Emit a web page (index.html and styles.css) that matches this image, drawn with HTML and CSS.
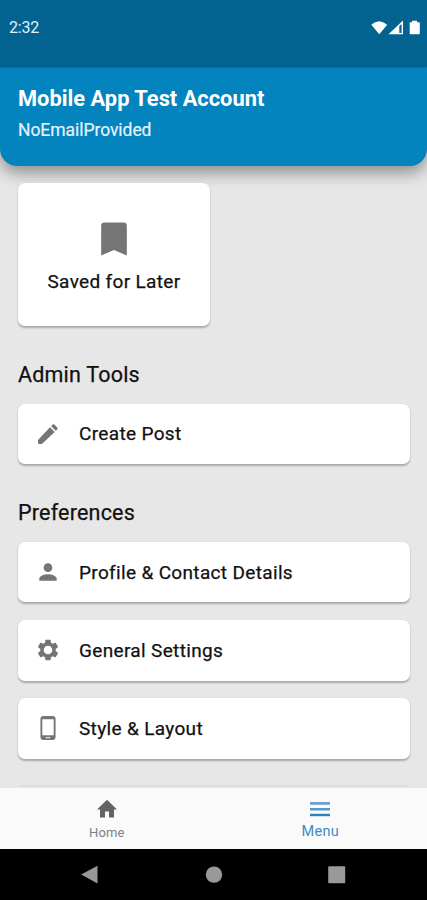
FILE: index.html
```html
<!DOCTYPE html>
<html lang="en">
<head>
<meta charset="utf-8">
<title>Menu</title>
<link rel="stylesheet" href="styles.css">
</head>
<body>
<div class="screen">
  <div class="status">
    <span class="time">2:32</span>
    <svg class="status-icons" width="50" height="16" viewBox="0 0 50 16" fill="#fff">
      <path d="M.3 4.8Q8 -2.2 16.2 4.8L8.3 14.2Z"/>
      <path fill-rule="evenodd" d="M17.5 14.2 32 .5V14.2ZM28.3 6v7h2.3V4Z"/>
      <path d="M39 2.200h2V.7h5v1.500h2q.8 0 .8.8v10.300q0 .9-.8.9h-8.500q-.8 0-.8-.9V3q0-.8.8-.8Z"/>
    </svg>
  </div>
  <header class="account">
    <h1>Mobile App Test Account</h1>
    <p>NoEmailProvided</p>
  </header>
  <main class="content">
    <section class="card tile">
      <svg width="44" height="44" viewBox="0 0 24 24"><path d="M17.500 3h-11c-.8 0-1.500.7-1.500 1.500V21l7-3 7 3V4.500c0-.8-.7-1.500-1.500-1.500z"/></svg>
      <span>Saved for Later</span>
    </section>
    <h2>Admin Tools</h2>
    <div class="list">
      <div class="card row">
        <svg width="26" height="26" viewBox="0 0 24 24"><path d="M2.800 17.600V20.200q0 1 1 1H6.400L18.200 10.200l-4.400-4.400zM20.710 7.600c.39-.39.39-1.020 0-1.410l-2.900-2.900c-.39-.39-1.020-.39-1.410 0l-1.500 1.500 4.310 4.310 1.500-1.500z"/></svg>
        <span>Create Post</span>
      </div>
    </div>
    <h2>Preferences</h2>
    <div class="list">
      <div class="card row">
        <svg width="26" height="26" viewBox="0 0 24 24"><path d="M12 12c2.210 0 4-1.790 4-4s-1.790-4-4-4-4 1.790-4 4 1.790 4 4 4zm0 2c-2.670 0-8 1.340-8 4v2h16v-2c0-2.660-5.330-4-8-4z"/></svg>
        <span>Profile &amp; Contact Details</span>
      </div>
      <div class="card row">
        <svg width="26" height="26" viewBox="-.6 -.6 25.200 25.200"><path fill-rule="evenodd" d="M19.430 12.980c.04-.32.07-.64.07-.98s-.03-.66-.07-.98l2.110-1.650c.19-.15.24-.42.12-.64l-2-3.460c-.12-.22-.39-.3-.61-.22l-2.490 1c-.52-.4-1.080-.73-1.690-.98l-.38-2.650C14.460 2.180 14.250 2 14 2h-4c-.25 0-.46.18-.49.42l-.38 2.650c-.61.25-1.170.59-1.690.98l-2.490-1c-.23-.09-.49 0-.61.22l-2 3.460c-.13.22-.07.49.12.64l2.110 1.650c-.04.32-.07.65-.07.98s.03.66.07.98l-2.110 1.650c-.19.15-.24.42-.12.64l2 3.460c.12.22.39.3.61.22l2.490-1c.52.4 1.080.73 1.690.98l.38 2.650c.03.24.24.42.49.42h4c.25 0 .46-.18.49-.42l.38-2.650c.61-.25 1.170-.59 1.690-.98l2.490 1c.23.09.49 0 .61-.22l2-3.460c.12-.22.07-.49-.12-.64l-2.110-1.650zM12 16.200a4.200 4.200 0 1 1 0-8.400 4.200 4.200 0 0 1 0 8.400z"/></svg>
        <span>General Settings</span>
      </div>
      <div class="card row">
        <svg width="26" height="26" viewBox="0 0 24 24"><path fill-rule="evenodd" d="M16.500 1h-9C6.100 1 5 2.100 5 3.500v17C5 21.900 6.100 23 7.500 23h9c1.400 0 2.500-1.100 2.500-2.500v-17C19 2.100 17.900 1 16.500 1zm-2.500 20.500h-4v-1h4v1zm3.250-2.700H6.750V4h10.500v14.800z"/></svg>
        <span>Style &amp; Layout</span>
      </div>
    </div>
    <div class="next-card"></div>
  </main>
  <nav class="tabs">
    <div class="tab">
      <svg width="24" height="24" viewBox="0 0 24 24"><path d="M10 20.500v-6h4v6h5v-8h3L12 2.800 2 12.500h3v8z"/></svg>
      <span>Home</span>
    </div>
    <div class="tab active">
      <svg width="24" height="24" viewBox="0 0 24 24"><path fill="#6fa3cb" d="M2 5h20v2.800H2z"/><path fill="#5b98c6" d="M2 11h20v2.500H2z"/><path d="M2 16.800h20v2.400H2z"/></svg>
      <span>Menu</span>
    </div>
  </nav>
  <div class="system">
    <svg width="20" height="20" viewBox="0 0 20 20"><path d="M.2 9.600 16.500.8V18.400Z"/></svg>
    <svg width="20" height="20" viewBox="0 0 20 20"><circle cx="10" cy="9.600" r="8.200"/></svg>
    <svg width="20" height="20" viewBox="0 0 20 20"><rect x="1.200" y="1.200" width="17" height="17" rx="1"/></svg>
  </div>
</div>
</body>
</html>
```
FILE: styles.css
```css
* { box-sizing: border-box; }
body { margin: 0; font-family: Roboto, sans-serif; color: #111; }
h1, h2, p { margin: 0; }
svg { display: block; flex: none; }
.screen { width: 427px; height: 900px; display: flex; flex-direction: column; overflow: hidden; background: #e7e7e7; }
.status { height: 67px; flex: none; background: #036390; color: #e4f1f8; display: flex; justify-content: space-between; align-items: flex-start; padding: 20px 6px 0 9px; box-shadow: 0 0 2px rgba(0,50,80,.6); z-index: 2; }
.time { font-size: 16px; line-height: 16px; letter-spacing: -.2px; }
.account { height: 98.500px; flex: none; background: #0384bf; padding: 19px 18px 0; border-radius: 0 0 17px 17px; box-shadow: 0 7px 16px rgba(0,0,0,.38); }
.account h1 { font-size: 21.850px; line-height: 26px; font-weight: 700; color: #fff; }
.account p { font-size: 17.500px; line-height: 20px; margin-top: 7.500px; color: #e4f2fa; letter-spacing: -.05px; -webkit-text-stroke: .2px #e4f2fa; }
.content { flex: 1; min-height: 0; overflow: hidden; padding: 17.500px 17px 0 18px; z-index: 1; }
.card { background: #fff; border-radius: 7px; box-shadow: 0 1.500px 2px rgba(0,0,0,.27); fill: #757575; font-size: 19px; font-weight: 400; letter-spacing: .34px; -webkit-text-stroke: .25px #111; }
.tile { width: 192px; height: 143px; display: flex; flex-direction: column; align-items: center; padding-top: 34px; }
.tile span { line-height: 22px; margin-top: 10px; }
.content h2 { font-size: 21.500px; font-weight: 400; line-height: 26px; letter-spacing: .2px; margin: 35.500px 0 16px; -webkit-text-stroke: .25px #111; }
.list { display: flex; flex-direction: column; gap: 17.500px; }
.row { height: 60.700px; flex: none; display: flex; align-items: center; gap: 18px; padding: 0 0 0 17px; }
.next-card { height: 2px; margin-top: 26.500px; background: #dedede; border-radius: 7px 7px 0 0; }
.tabs { height: 61px; flex: none; display: flex; justify-content: space-around; background: #fafafa; }
.tab { flex: 1; display: flex; flex-direction: column; align-items: center; padding-top: 9px; fill: #636363; color: #808080; font-size: 13px; line-height: 16px; letter-spacing: .1px; }
.tab span { margin-top: 4px; }
.active { fill: #2885b9; color: #3a8cc2; font-size: 14.500px; letter-spacing: .3px; }
.active span { margin-top: 3px; }
.system { height: 51px; flex: none; background: #000; display: flex; justify-content: center; align-items: center; gap: 103px; fill: #999; }
```
